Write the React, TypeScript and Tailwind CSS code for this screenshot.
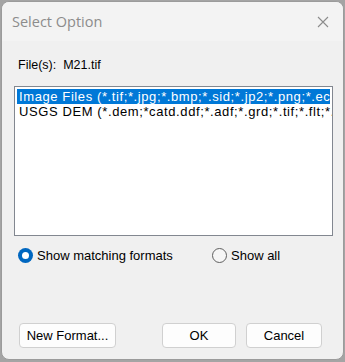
import React from "react";

function Radio({ checked }: { checked: boolean }) {
  return checked ? (
    <span className="flex h-[15px] w-[15px] items-center justify-center rounded-full bg-[#0067c0]">
      <span className="h-[7px] w-[7px] rounded-full bg-white" />
    </span>
  ) : (
    <span className="h-[15px] w-[15px] rounded-full border border-[#5f5f5f] bg-[#f6f6f6]" />
  );
}

export default function App() {
  return (
    <div className="h-[362px] w-[345px] bg-[#a4a4a4] pl-[1px] pt-[1px] font-['Liberation_Sans',sans-serif] text-[13px] text-black">
      <div className="flex h-[359px] w-[343px] flex-col overflow-hidden rounded-[8px] border border-[#9b9b9b] bg-[#f0f0f0]">
        {/* title bar */}
        <div className="flex h-[39px] shrink-0 items-center justify-between bg-[#f3f3f3] pl-[10px] pr-[14px]">
          <span className="font-['Open_Sans',sans-serif] text-[14.5px] text-[#8c8c8c]">Select Option</span>
          <svg width="12" height="12" viewBox="0 0 12 12" className="text-[#8c8c8c]">
            <path d="M1 1L11 11M11 1L1 11" stroke="currentColor" strokeWidth="1.1" />
          </svg>
        </div>

        <div className="flex flex-1 flex-col px-[12px]">
          <div className="mt-[17px] pl-[4px] text-[12.5px] leading-[14px]">
            File(s):&nbsp;&nbsp;M21.tif
          </div>

          {/* format list, long entries run past the right edge */}
          <div className="mt-[14px] h-[150px] w-[319px] overflow-hidden border border-[#828790] bg-white p-[2px] tracking-[0.6px]">
            <div className="whitespace-nowrap bg-[#0078d7] pl-[2px] leading-[15px] text-white">
              Image Files (*.tif;*.jpg;*.bmp;*.sid;*.jp2;*.png;*.ecw;*.img)
            </div>
            <div className="whitespace-nowrap pl-[2px] leading-[15px]">
              USGS DEM (*.dem;*catd.ddf;*.adf;*.grd;*.tif;*.flt;*.asc)
            </div>
          </div>

          <div className="mt-[10px] flex items-center pl-[4px]">
            <div className="flex w-[194px] items-center gap-[4px]">
              <Radio checked />
              <span>Show matching formats</span>
            </div>
            <div className="flex items-center gap-[4px]">
              <Radio checked={false} />
              <span>Show all</span>
            </div>
          </div>

          <div className="mt-auto mb-[11px] flex items-center pl-[5px]">
            <button className="h-[25px] w-[97px] rounded-[4px] border border-[#d0d0d0] bg-[#fdfdfd]">
              New Format...
            </button>
            <button className="ml-[46px] h-[25px] w-[74px] rounded-[4px] border border-[#d0d0d0] bg-[#fdfdfd]">
              OK
            </button>
            <button className="ml-[10px] h-[25px] w-[76px] rounded-[4px] border border-[#d0d0d0] bg-[#fdfdfd]">
              Cancel
            </button>
          </div>
        </div>
      </div>
    </div>
  );
}
